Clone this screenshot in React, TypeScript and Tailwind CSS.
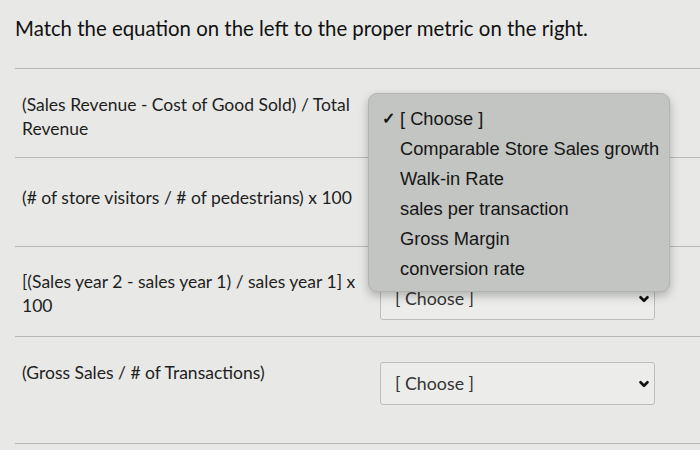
import { ChevronDown } from "lucide-react";

interface Row {
  lines: string[];
  height: string;
  pad: string;
  selectTop: string;
  hidden?: boolean;
}

const rows: Row[] = [
  { lines: ["(Sales Revenue - Cost of Good Sold) / Total", "Revenue"], height: "h-[89px]", pad: "pt-[24px]", selectTop: "mt-[28px]", hidden: true },
  { lines: ["(# of store visitors / # of pedestrians) x 100"], height: "h-[89px]", pad: "pt-[28px]", selectTop: "mt-[28px]", hidden: true },
  { lines: ["[(Sales year 2 - sales year 1) / sales year 1] x", "100"], height: "h-[90px]", pad: "pt-[23px]", selectTop: "mt-[30px]" },
  { lines: ["(Gross Sales / # of Transactions)"], height: "h-[107px]", pad: "pt-[24px]", selectTop: "mt-[25px]" },
];

const options = [
  "Comparable Store Sales growth",
  "Walk-in Rate",
  "sales per transaction",
  "Gross Margin",
  "conversion rate",
];

function SelectBox({ top, hidden }: { top: string; hidden?: boolean }) {
  return (
    <div
      className={`${top} flex h-[43px] w-[275px] items-center justify-between rounded-[3px] border border-[#bdbebb] bg-[#ecedea] pl-[14px] pr-[3px] text-[17.8px] text-[#333]`}
    >
      <span>{hidden ? "" : "[ Choose ]"}</span>
      <ChevronDown className="h-[14px] w-[14px] text-[#111]" strokeWidth={4.5} />
    </div>
  );
}

export default function App() {
  return (
    <div
      className="relative h-[450px] w-[700px] overflow-hidden bg-[#e8e9e6] text-[#222]"
      style={{ fontFamily: "Lato, 'Noto Sans', sans-serif" }}
    >
      {/* Title */}
      <div className="ml-[15px] flex h-[69px] items-start border-b border-[#b7b8b5] pt-[13px] text-[20.4px] text-[#111]">
        Match the equation on the left to the proper metric on the right.
      </div>

      {/* Rows */}
      {rows.map((row, i) => (
        <div
          key={i}
          className={`ml-[15px] flex ${row.height} border-b border-[#b7b8b5]`}
        >
          <div className={`w-[365px] pl-[7px] ${row.pad} text-[17.5px] leading-[24px] text-[#1e1e1e]`}>
            {row.lines.map((l, j) => (
              <div key={j}>{l}</div>
            ))}
          </div>
          <div>
            <SelectBox top={row.selectTop} hidden={row.hidden} />
          </div>
        </div>
      ))}

      {/* Open dropdown menu */}
      <div
        className="absolute left-[368px] top-[93px] h-[199px] w-[302px] rounded-[9px] border border-[#b2b4b1] bg-[#c3c5c2] pt-[10px] text-[18.3px] text-[#161616] shadow-[0_4px_10px_rgba(0,0,0,0.25)]"
        style={{ fontFamily: "'Liberation Sans', Arial, sans-serif" }}
      >
        <div className="flex h-[30px] items-center">
          <span className="w-[31px] pl-[13px] text-[16px] font-bold">✓</span>
          <span>[ Choose ]</span>
        </div>
        {options.map((o) => (
          <div key={o} className="flex h-[30px] items-center pl-[31px]">
            {o}
          </div>
        ))}
      </div>
    </div>
  );
}
